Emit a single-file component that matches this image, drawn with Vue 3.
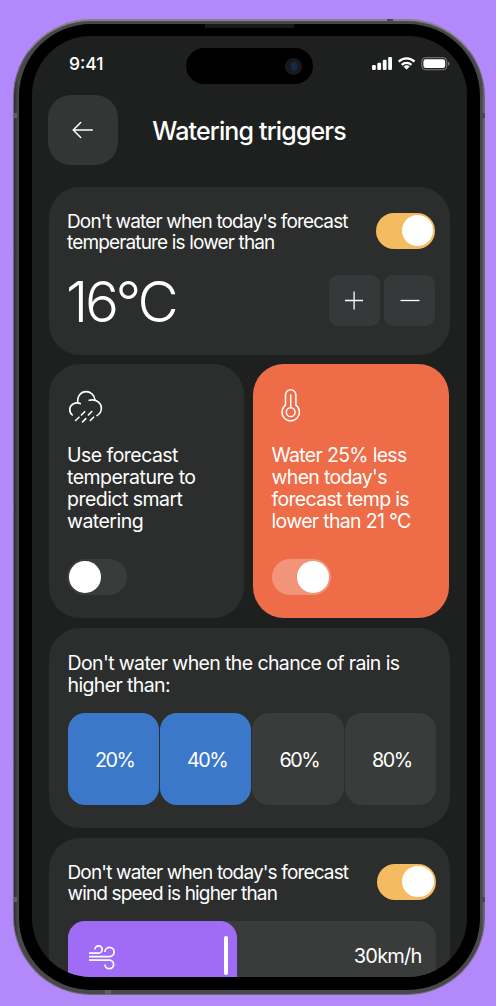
<script setup>
const chances = [
  { label: '20%', active: true },
  { label: '40%', active: true },
  { label: '60%', active: false },
  { label: '80%', active: false },
]
</script>

<template>
  <div class="stage">
    <div class="phone">
      <i class="speaker"></i>
      <i class="band band-top"></i>
      <i class="band band-left"></i>
      <i class="band band-right"></i>
      <i class="band band-bottom"></i>
      <i class="band band-low-left"></i>
      <i class="band band-low-right"></i>
      <div class="bezel">
        <div class="screen">
          <div class="island"><i class="camera"><b></b></i></div>

          <div class="status">
            <span class="time">9:41</span>
            <svg class="indicators" width="78" height="16" viewBox="0 0 78 16">
              <g fill="#fff">
                <rect x="0" y="9" width="3.8" height="5" rx="1.2" />
                <rect x="5.3" y="6.7" width="3.8" height="7.3" rx="1.2" />
                <rect x="10.8" y="3.8" width="3.8" height="10.2" rx="1.2" />
                <rect x="16.2" y="1" width="3.8" height="13" rx="1.2" />
                <path d="M32.300 10.200a4.300 4.300 0 0 1 4.800 0 .4.4 0 0 1 0 .6l-2.200 2.300q-.3.300-.6 0l-2.100-2.300a.4.4 0 0 1 .1-.6z" stroke="#fff" stroke-width=".6" />
              </g>
              <g fill="none" stroke="#fff" stroke-width="2.300">
                <path d="M26.700 5.600a11.300 11.300 0 0 1 15.800 0" />
                <path d="M29.700 8.900a7 7 0 0 1 9.800 0" />
              </g>
              <rect x="49.8" y="1.7" width="25" height="12" rx="3.6" fill="none" stroke="#fff" stroke-opacity=".42" />
              <rect x="51.4" y="3.3" width="21.8" height="8.8" rx="2.3" fill="#fff" />
              <path d="M76.1 5.8v4q1.4-.5 1.4-2t-1.4-2z" fill="#fff" fill-opacity=".45" />
            </svg>
          </div>

          <header class="header">
            <button class="back">
              <svg width="22" height="18" viewBox="0 0 22 18" fill="none" stroke="#fff" stroke-width="1.5" stroke-linecap="round" stroke-linejoin="round">
                <path d="M20.3 9H1.2M8.7 1.5 1.2 9l7.5 7.5" />
              </svg>
            </button>
            <h1>Watering triggers</h1>
          </header>

          <main class="cards">
            <section class="card temperature">
              <div class="row">
                <p class="tight">Don't water when today's forecast<br />temperature is lower than</p>
                <span class="toggle on"><i></i></span>
              </div>
              <div class="row stepper">
                <strong class="degrees">16°C</strong>
                <div class="buttons">
                  <button>
                    <svg width="20" height="20" viewBox="0 0 20 20" stroke="#fff" stroke-width="1.3"><path d="M1 10.5h18M10.1 1.500v18" /></svg>
                  </button>
                  <button>
                    <svg width="20" height="20" viewBox="0 0 20 20" stroke="#fff" stroke-width="1.3"><path d="M.5 10.5h19" /></svg>
                  </button>
                </div>
              </div>
            </section>

            <div class="pair">
              <section class="card tile">
                <svg class="icon cloud" width="36" height="36" viewBox="0 0 36 36" fill="none" stroke="#fff" stroke-width="1.6" stroke-linecap="round" stroke-linejoin="round">
                  <path d="M5.300 27C3.200 25.200 2.500 22.800 2.800 20.500 3.500 16.200 8.500 13.700 13.300 15.600" />
                  <path d="M10.900 14.900C9.800 8 14 3.600 19 3.600c4.600 0 8.300 3.200 8.900 7.900" />
                  <path d="M22.200 12.300c7.200-1.700 12 2.600 12.200 7.800.1 3-1.500 5.700-4.400 7.500" />
                  <path d="M17.700 23.700l-3.300 3.300M24.800 23.500l-3.400 3.500M12 29.200l-3.400 3.300M18.800 30.600l-3.300 3.400M26.600 29.200l-3.300 3.300" />
                </svg>
                <p>Use forecast<br />temperature to<br />predict smart<br />watering</p>
                <span class="toggle off"><i></i></span>
              </section>

              <section class="card tile orange">
                <svg class="icon" width="36" height="36" viewBox="0 0 36 36" fill="none" stroke="#fff" stroke-width="1.5" stroke-linecap="round">
                  <path d="M13.500 17.200V7a5.200 5.200 0 0 1 10.400 0v10.200a8.700 8.700 0 1 1-10.400 0z" />
                  <circle cx="18.700" cy="24.200" r="4.400" />
                  <path d="M18.700 19.600V7" />
                </svg>
                <p>Water 25% less<br />when today's<br />forecast temp is<br />lower than 21 °C</p>
                <span class="toggle on"><i></i></span>
              </section>
            </div>

            <section class="card rain">
              <p class="chance">Don't water when the chance of rain is<br />higher than:</p>
              <div class="options">
                <button v-for="c in chances" :key="c.label" :class="{ active: c.active }">{{ c.label }}</button>
              </div>
            </section>

            <section class="card wind">
              <div class="row">
                <p class="tight">Don't water when today's forecast<br />wind speed is higher than</p>
                <span class="toggle on"><i></i></span>
              </div>
              <div class="slider">
                <div class="fill">
                  <svg width="27" height="26" viewBox="0 0 27 26" fill="none" stroke="#fff" stroke-width="1.7">
                    <path d="M0 9.100h9.600a3.650 3.650 0 1 0-3.700-3.700" />
                    <path d="M0 12.600h20.600a4.600 4.600 0 1 0-4.700-4.600" />
                    <path d="M0 16.100h20.600a4.300 4.300 0 1 1-4.600 4.300" />
                  </svg>
                  <i class="handle"></i>
                </div>
                <span>30km/h</span>
              </div>
            </section>
          </main>
        </div>
      </div>
    </div>
  </div>
</template>

<style>
html,
body {
  margin: 0;
  background: #b388fb;
  overflow: hidden;
}
</style>

<style scoped>
* {
  box-sizing: border-box;
}
.stage {
  width: 496px;
  height: 1006px;
  padding: 19px 0 0 13px;
  overflow: hidden;
  background: #b388fb;
  font-family: Inter, "Liberation Sans", sans-serif;
  color: #fff;
}
.phone {
  position: relative;
  width: 472px;
  height: 976px;
  padding: 3px 4px 4px 5px;
  border-radius: 78px;
  background: linear-gradient(90deg, #2d2d2f 0, #48484a 4px, #48484a 468px, #6a6a6c 100%);
  border: 1px solid #6c6a70;
  border-top: 2px solid #858487;
}
.bezel {
  height: 100%;
  padding: 12px 13px 13px 13px;
  border-radius: 72px;
  background: #000;
}
.screen {
  position: relative;
  width: 435px;
  height: 941px;
  overflow: hidden;
  border-radius: 59px;
  background: #1e201f;
}
.speaker {
  position: absolute;
  top: 3px;
  left: 191px;
  width: 89px;
  height: 4px;
  background: #1a1a1b;
}
.band {
  position: absolute;
  background: #48484a;
}
.band-top { top: -2px; left: 373px; width: 6px; height: 4px; }
.band-left { top: 92px; left: 0; width: 3px; height: 5px; background: #606063; }
.band-right { top: 92px; right: -1px; width: 4px; height: 5px; }
.band-bottom { bottom: 0; left: 91px; width: 6px; height: 4px; background: #606063; }
.band-low-left { bottom: 92px; left: 0; width: 3px; height: 5px; background: #606063; }
.band-low-right { bottom: 92px; right: -1px; width: 4px; height: 5px; }
.island {
  position: absolute;
  top: 12px;
  left: 154px;
  width: 127px;
  height: 36px;
  border-radius: 18px;
  background: #000;
}
.camera {
  position: absolute;
  top: 10px;
  right: 11px;
  width: 17px;
  height: 17px;
  border-radius: 50%;
  background: #18191b;
}
.camera b {
  position: absolute;
  top: 4px;
  left: 6px;
  width: 6px;
  height: 9px;
  border-radius: 3px;
  background: #14284a;
}
.status {
  display: flex;
  justify-content: space-between;
  height: 59px;
  padding: 17px 17.500px 0 37px;
}
.time {
  font-size: 17.500px;
  font-weight: 550;
  line-height: 22px;
  letter-spacing: 0;
}
.indicators {
  margin-top: 3px;
}
.header {
  display: flex;
  align-items: center;
  height: 70px;
  padding-left: 16.300px;
}
button {
  display: flex;
  align-items: center;
  justify-content: center;
  padding: 0;
  border: 0;
  font: inherit;
  color: inherit;
}
.back {
  width: 70px;
  height: 70px;
  border-radius: 23px;
  background: #343635;
}
h1 {
  margin: 2px 0 0 34px;
  font-size: 25px;
  font-weight: 500;
  line-height: 30px;
  letter-spacing: -0.850px;
  white-space: nowrap;
}
.cards {
  display: flex;
  flex-direction: column;
  gap: 9.500px;
  padding: 21.500px 17.500px 0 16.500px;
}
.card {
  border-radius: 31px;
  background: #2c2e2d;
}
p {
  margin: 0;
  font-size: 19.500px;
  line-height: 22px;
  letter-spacing: -0.530px;
  white-space: nowrap;
}
.orange p {
  letter-spacing: -0.680px;
}
.chance {
  letter-spacing: -0.620px;
}
.tight {
  font-size: 19px;
  line-height: 21px;
  letter-spacing: -0.850px;
}
.row {
  display: flex;
  justify-content: space-between;
}
.temperature {
  height: 168px;
  padding: 24px 14.200px 0 18.500px;
}
.stepper {
  margin-top: 22px;
}
.degrees {
  font-size: 56.500px;
  font-weight: 330;
  line-height: 54px;
  letter-spacing: -3.300px;
  margin-left: -1px;
}
.buttons {
  display: flex;
  gap: 4.500px;
}
.buttons button {
  width: 51px;
  height: 51px;
  border-radius: 9px;
  background: #37383a;
}
.toggle {
  display: flex;
  flex: none;
  width: 59.500px;
  height: 36px;
  margin-top: 2px;
  padding: 2.200px;
  border-radius: 18px;
  background: #f4bb60;
}
.toggle.on {
  justify-content: flex-end;
}
.toggle.off {
  background: #3a3c3b;
}
.toggle i {
  width: 31.600px;
  height: 31.600px;
  border-radius: 50%;
  background: #fff;
}
.pair {
  display: grid;
  grid-template-columns: 195px 195.500px;
  gap: 9.500px;
}
.tile {
  height: 254px;
  padding: 23.500px 18.500px 0;
}
.orange {
  background: #ee6c47;
}
.orange .toggle {
  background: #f29479;
}
.icon {
  display: block;
}
.cloud {
  margin-left: -0.500px;
}
.tile p {
  margin-top: 20px;
}
.tile .toggle {
  margin-top: 27.500px;
}
.rain {
  height: 200.500px;
  padding: 24px 13.500px 0 19px;
}
.options {
  display: grid;
  grid-template-columns: repeat(4, 91.300px);
  gap: 1.100px;
  margin-top: 17.500px;
}
.options button {
  height: 91.500px;
  padding: 2px 0 0 3px;
  border-radius: 17px;
  background: #3a3c3b;
  font-size: 19.800px;
  letter-spacing: -1.500px;
}
.options .active {
  background: #3b78c9;
}
.wind {
  height: 190px;
  padding: 24px 13.500px 0 19px;
}
.wind .toggle {
  margin-top: 2px;
}
.slider {
  display: flex;
  justify-content: space-between;
  height: 92px;
  margin-top: 17.500px;
  padding-right: 14.500px;
  border-radius: 17px;
  background: #3a3c3b;
  font-size: 20px;
  letter-spacing: -0.800px;
}
.slider span {
  margin-top: 23px;
  line-height: 24px;
}
.fill {
  display: flex;
  justify-content: space-between;
  width: 169px;
  padding: 15px 8.500px 0 21px;
  border-radius: 17px;
  background: #a06cf6;
}
.fill svg {
  margin-top: 8px;
}
.handle {
  width: 4px;
  height: 38.500px;
  border-radius: 2px;
  background: #fff;
}
</style>
